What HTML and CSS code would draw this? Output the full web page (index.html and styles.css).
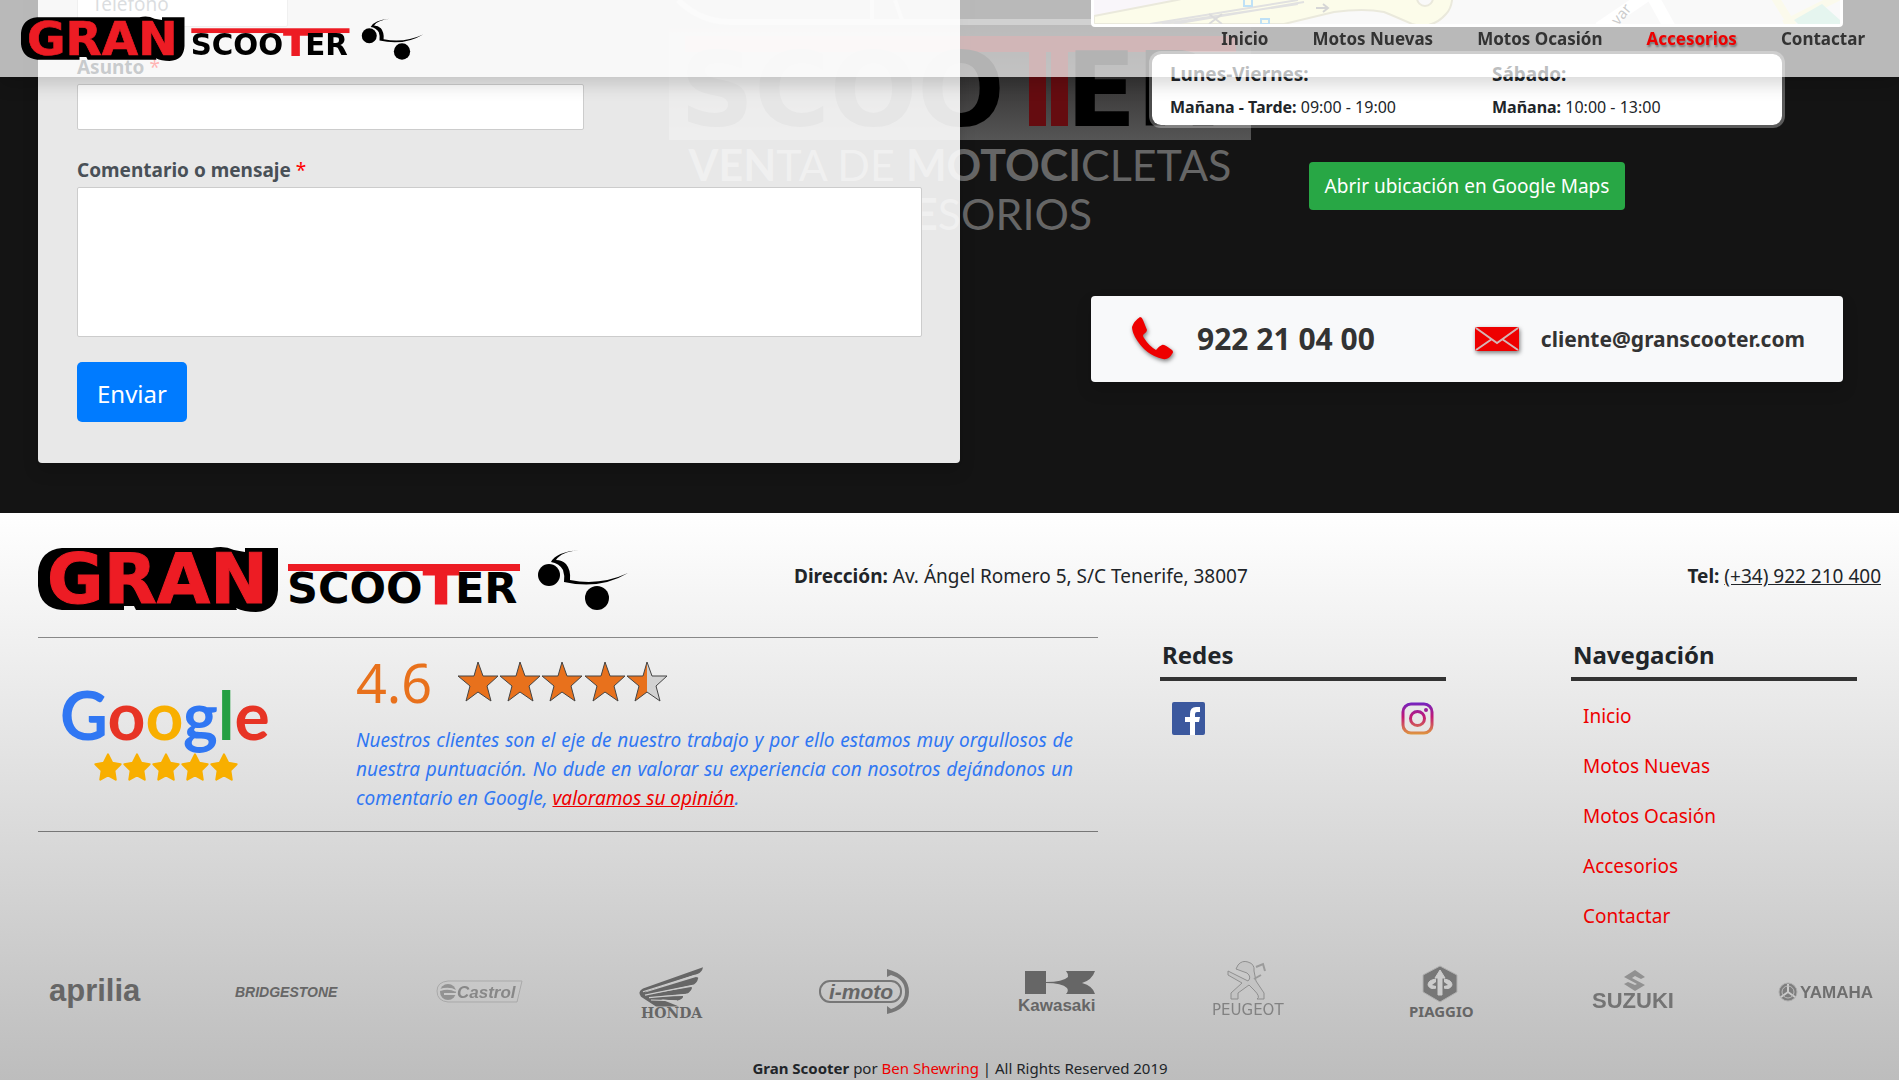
FILE: index.html
```html
<!DOCTYPE html>
<html lang="es">
<head>
<meta charset="utf-8">
<meta name="viewport" content="width=device-width, initial-scale=1">
<title>Gran Scooter</title>
<link rel="stylesheet" href="styles.css">
</head>
<body>
<svg class="defs" aria-hidden="true">
  <symbol id="logo" viewBox="0 0 590 66">
    <path d="M24 2H174Q186-1 196 4L207 6V2H240V44Q239 65 218 66Q206 66 198 62L199 64H98L96 60H86V64H24Q2 62 0 40V26Q2 4 24 2Z"/>
    <text class="logo-gran" x="9" y="57">GRAN</text>
    <rect x="250" y="18" width="232" height="7" fill="#ed1c24"/>
    <text class="logo-scooter" x="249" y="57">SCOO</text>
    <text class="logo-tee" x="403" y="57" text-anchor="middle">T</text>
    <text class="logo-scooter" x="417" y="57">ER</text>
    <ellipse cx="511" cy="29" rx="11" ry="11"/>
    <ellipse cx="559" cy="52" rx="12" ry="12"/>
    <path d="M541 4Q518 6 513 16Q521 17 525 24Q527 30 526 36Q562 44 590 27Q562 40 532 34Q533 24 528 18Q524 14 518 14Q523 6 541 4Z"/>
  </symbol>
  <symbol id="star" viewBox="0 0 40 40"><path stroke="#f8af00" stroke-width="3" stroke-linejoin="round" d="M20 2L26 14L38 16L29 25L31 38L20 32L9 38L11 25L2 16L14 14Z"/></symbol>
</svg>

<header class="navbar">
  <a href="#inicio" aria-label="Gran Scooter"><svg class="nav-logo" viewBox="0 0 590 66"><use href="#logo"/></svg></a>
  <nav class="nav-links">
    <a href="#inicio">Inicio</a>
    <a href="#nuevas">Motos Nuevas</a>
    <a href="#ocasion">Motos Ocasión</a>
    <a class="active" href="#accesorios">Accesorios</a>
    <a href="#contactar">Contactar</a>
  </nav>
</header>

<main class="contact">
  <svg class="watermark" viewBox="0 0 600 240" aria-hidden="true">
    <defs><linearGradient id="plate" x1="0" y1="0" x2="0" y2="1"><stop offset="0" stop-color="#1c1a1a"/><stop offset="1" stop-color="#555"/></linearGradient></defs>
    <path d="M18 0Q40 22 70 22H590" fill="none" stroke="#666" stroke-width="6"/>
    <path d="M212 0V20M235 0L242 20" stroke="#666" stroke-width="4"/>
    <rect x="9" y="25" width="582" height="115" fill="url(#plate)"/>
    <rect x="25" y="36" width="551" height="16" fill="#650c10"/>
    <path d="M369 52H386V126H369ZM391 52H408V126H391Z" fill="#650c10"/>
    <text class="wm-big" x="20" y="126">SCOO</text>
    <text class="wm-big" x="406" y="126">ER</text>
    <text class="wm-small" x="300" y="181" text-anchor="middle"><tspan font-weight="700">VEN</tspan>TA DE <tspan font-weight="700">MOTOCI</tspan>CLETAS</text>
    <text class="wm-small" x="300" y="230" text-anchor="middle"><tspan font-weight="700">ACCE</tspan>SORIOS</text>
  </svg>

  <form class="form-card">
    <input class="field phone" type="tel" placeholder="Teléfono" aria-label="Teléfono">
    <label for="asunto">Asunto <span class="req">*</span></label>
    <input class="field subject" id="asunto" type="text">
    <label for="mensaje">Comentario o mensaje <span class="req">*</span></label>
    <textarea class="field message" id="mensaje"></textarea>
    <button class="send" type="button">Enviar</button>
  </form>

  <div class="info">
    <div class="map">
      <svg viewBox="0 0 746 84" preserveAspectRatio="xMidYMax slice" aria-hidden="true">
        <rect width="746" height="84" fill="#eceaec"/>
        <path d="M0 0H210L83 60L0 77Z" fill="#ece0ee"/>
        <path d="M0 76L83 60L300 10H350Q366 60 352 74Q338 90 318 84Q300 76 290 72Q270 68 240 72L190 84H0Z" fill="#f6f6b8" stroke="#b9b58a" stroke-width="2"/>
        <path d="M56 84L204 60M80 84L210 62M68 84L204 64" stroke="#999" stroke-width="2" fill="none"/>
        <path d="M115 74L128 84M128 74L115 84" stroke="#888" stroke-width="2"/>
        <path d="M222 68H234M229 64L234 68L229 72" stroke="#777" stroke-width="2" fill="none"/>
        <circle cx="331" cy="58" r="8" fill="#eceaea" stroke="#b9b58a" stroke-width="2"/>
        <path d="M150 59h8v7h-8zM167 79h8v5h-8z" fill="none" stroke="#2b9be0" stroke-width="2"/>
        <path d="M505 88L555 54M555 50L576 88" stroke="#fff" stroke-width="12"/>
        <path d="M680 56L700 88M690 84L746 56" stroke="#f0efc0" stroke-width="8"/>
        <path d="M700 80L728 64L746 80V84H704Z" fill="#a8dcc8"/>
        <text class="street" x="524" y="86" transform="rotate(-50 524 86)">var</text>
      </svg>
    </div>
    <div class="hours">
      <div><h2>Lunes-Viernes:</h2><p><b>Mañana - Tarde:</b> 09:00 - 19:00</p></div>
      <div><h2>Sábado:</h2><p><b>Mañana:</b> 10:00 - 13:00</p></div>
    </div>
    <a class="maps-btn" href="#maps">Abrir ubicación en Google Maps</a>
    <div class="direct">
      <a class="phone-link" href="tel:922210400">
        <svg class="shadowed" width="44" height="44" viewBox="0 0 44 44" aria-hidden="true"><path fill="#e00" d="M1 10Q3 4 9 0Q11 0 12 3L16 13Q16 15 13 17Q11 18 13 21Q18 29 25 33Q28 29 31 28Q33 27 41 33Q43 35 41 37Q38 43 32 42Q14 38 4 20Q1 14 1 10Z"/></svg>
        922 21 04 00</a>
      <a class="mail-link" href="mailto:cliente@granscooter.com">
        <svg class="shadowed" width="44" height="26" viewBox="0 0 44 26" aria-hidden="true"><rect x="0" y="1" width="44" height="24" rx="2" fill="#e00"/><path d="M1 2L22 17L43 2M1 24L17 13M43 24L27 13" fill="none" stroke="#d5b5b5" stroke-width="2"/></svg>
        cliente@granscooter.com</a>
    </div>
  </div>
</main>

<footer class="footer">
  <div class="foot-top">
    <svg class="foot-logo" viewBox="0 0 590 66" role="img" aria-label="Gran Scooter"><use href="#logo"/></svg>
    <p><b>Dirección:</b> Av. Ángel Romero 5, S/C Tenerife, 38007</p>
    <p class="tel"><b>Tel:</b> <a href="tel:+34922210400">(+34) 922 210 400</a></p>
  </div>

  <div class="foot-main">
    <section class="rating">
      <svg class="google" viewBox="0 0 210 96" role="img" aria-label="Google">
        <text class="google-word" x="-3" y="51"><tspan fill="#3077f3">G</tspan><tspan fill="#e73425">o</tspan><tspan fill="#f8af00">o</tspan><tspan fill="#3077f3">g</tspan><tspan fill="#249f42">l</tspan><tspan fill="#e73425">e</tspan></text>
        <g fill="#f8af00"><use href="#star" x="31" y="64" width="28" height="28"/><use href="#star" x="60" y="64" width="28" height="28"/><use href="#star" x="89" y="64" width="28" height="28"/><use href="#star" x="118" y="64" width="28" height="28"/><use href="#star" x="147" y="64" width="28" height="28"/></g>
      </svg>
      <div class="review">
        <div class="score">
          <span>4.6</span>
          <svg width="212" height="42" viewBox="0 0 212 42" role="img" aria-label="4.6 de 5">
            <defs><linearGradient id="half"><stop offset=".5" stop-color="#e8711c"/><stop offset=".5" stop-color="#d2d2d2"/></linearGradient>
            <path id="rs" d="M20 1L25 15H40L29 25L33 40L20 31L8 40L12 25L0 15H16Z" stroke="#444"/></defs>
            <g fill="#e8711c"><use href="#rs" x="1"/><use href="#rs" x="43"/><use href="#rs" x="85"/><use href="#rs" x="128"/></g><use href="#rs" x="170" fill="url(#half)"/>
          </svg>
        </div>
        <p>Nuestros clientes son el eje de nuestro trabajo y por ello estamos muy orgullosos de nuestra puntuación. No dude en valorar su experiencia con nosotros dejándonos un comentario en Google, <a href="#opinion">valoramos su opinión</a>.</p>
      </div>
    </section>
    <section class="col redes">
      <h3>Redes</h3>
      <div class="social">
        <a href="#facebook" aria-label="Facebook"><svg width="33" height="33" viewBox="0 0 33 33"><rect width="33" height="33" rx="2" fill="#3b589e"/><path fill="#fff" d="M18 33V20H13V15H18V12Q18 5 24 5H28V10H25Q23 10 23 12V15H28L27 20H23V33Z"/></svg></a>
        <a href="#instagram" aria-label="Instagram"><svg width="33" height="33" viewBox="0 0 33 33"><defs><linearGradient id="ig" x1="0" y1="0" x2="0" y2="33" gradientUnits="userSpaceOnUse"><stop offset="0" stop-color="#7024c4"/><stop offset=".45" stop-color="#c21975"/><stop offset="1" stop-color="#e09b3d"/></linearGradient></defs><rect x="2" y="2" width="29" height="29" rx="8" fill="none" stroke="url(#ig)" stroke-width="3"/><circle cx="16.500" cy="16.500" r="7" fill="none" stroke="url(#ig)" stroke-width="3"/><circle cx="25" cy="8" r="2" fill="url(#ig)"/></svg></a>
      </div>
    </section>
    <section class="col sitemap">
      <h3>Navegación</h3>
      <ul>
        <li><a href="#inicio">Inicio</a></li>
        <li><a href="#nuevas">Motos Nuevas</a></li>
        <li><a href="#ocasion">Motos Ocasión</a></li>
        <li><a href="#accesorios">Accesorios</a></li>
        <li><a href="#contactar">Contactar</a></li>
      </ul>
    </section>
  </div>

  <div class="brands">
    <svg viewBox="0 0 120 70"><text class="b" font-size="31" x="15" y="44">aprilia</text></svg>
    <svg viewBox="0 0 120 70"><text class="i" font-size="14" x="9" y="40">BRIDGESTONE</text></svg>
    <svg viewBox="0 0 120 70" opacity=".65"><path d="M29 24H103L98 45H29Q18 44 18 34Q18 25 29 24Z" fill="none" stroke="#999"/><circle cx="29" cy="35" r="8" fill="#777"/><path d="M21 33Q30 30 37 34M25 37H38" fill="none" stroke="#ccc" stroke-width="2"/><text class="i" font-size="17" x="38" y="41">Castrol</text></svg>
    <svg viewBox="0 0 120 70"><g transform="matrix(1 0 0 .82 0 2)"><path d="M92 10Q91 16 87 18L36 39L34 41L85 22Q88 22 87 24Q86 30 81 32L38 43L80 34Q82 34 80 38Q78 42 74 43L42 46L72 45Q73 48 66 51L50 49L68 58H45L30 46Q26 40 32 36Z" fill="#666"/><path d="M32 40L84 20M34 44L82 32M38 47L76 43M40 50L66 51" stroke="#ccc" stroke-width="1.500"/></g><text class="bs" font-size="14" x="30" y="61">HONDA</text></svg>
    <svg viewBox="0 0 120 70"><rect x="17" y="24" width="81" height="21" rx="10" fill="none" stroke="#777" stroke-width="2"/><path d="M84 12Q106 18 106 35Q106 52 84 57V49L88 52Q102 47 102 35Q102 22 88 18L84 20Z" fill="#777"/><text class="i" font-size="21" x="26" y="42">i-moto</text></svg>
    <svg viewBox="0 0 120 70"><path d="M29 14H50V25Q67 25 72 20Q72 16 70 14H99Q96 23 86 26Q97 29 99 37H70Q73 34 71 31Q66 26 50 26V37H29Z" fill="#666"/><text class="b" font-size="17" x="22" y="54">Kawasaki</text></svg>
    <svg viewBox="0 0 120 70" opacity=".7"><path d="M50 8Q54 3 60 5Q67 7 66 14L68 24L76 36V42H69Q73 40 66 33L61 28L50 36V42H43V36L54 26L40 18V14L52 20L60 24Q64 20 59 16L48 12Z" fill="#c2c2c2" stroke="#777"/><path d="M68 10L75 7L77 14M66 22L73 18" fill="none" stroke="#888" stroke-width="2"/><text class="d" font-size="15" x="24" y="58">PEUGEOT</text></svg>
    <svg viewBox="0 0 120 70"><path d="M60 9L77 18V35L60 45L43 35V18Z" fill="#777" stroke="#b2b2b2"/><path d="M60 13L65 21H62V38H58V21H55ZM56 22Q48 23 48 28Q50 33 56 31M64 22Q72 23 72 28Q70 33 64 31" fill="#ccc" stroke="#ccc" stroke-width="1"/><path d="M56 25L52 28L56 29M64 25L68 28L64 29" fill="#777"/><text class="n" font-size="15" x="29" y="60">PIAGGIO</text></svg>
    <svg viewBox="0 0 120 70" opacity=".85"><path d="M62 13L72 20L68 22L62 19L59 21L72 28L62 34L51 27L55 25L62 28L64 27L51 20Z" fill="#888"/><text class="b" font-size="22" x="19" y="51">SUZUKI</text></svg>
    <svg viewBox="0 0 120 70" opacity=".9"><circle cx="23" cy="35" r="9" fill="#777" stroke="#aaa"/><path d="M23 35V27M23 35L16 40M23 35L30 40" stroke="#ccc" stroke-width="2"/><circle cx="23" cy="35" r="6" fill="none" stroke="#bbb"/><text class="b" font-size="17" x="35" y="41">YAMAHA</text></svg>
  </div>
  <p class="copy"><b>Gran Scooter</b> por <a href="#autor">Ben Shewring</a> | All Rights Reserved 2019</p>
</footer>
</body>
</html>
```

FILE: styles.css
```css
* { box-sizing: border-box; }
body {
  margin: 0;
  font: 16px/24px "Noto Sans", "Open Sans", sans-serif;
  color: #212529;
  background: #bfbfbf;
}
a { color: inherit; text-decoration: none; }
h2, h3, p, ul { margin: 0; padding: 0; }
ul { list-style: none; }
svg { display: block; }
.defs { position: absolute; width: 0; height: 0; }

.logo-gran { font: 700 69px "DejaVu Sans", sans-serif; fill: #ed1c24; stroke: #ed1c24; stroke-width: 1; }
.logo-scooter { font: 700 43px "DejaVu Sans", sans-serif; fill: #000; }
.logo-tee { font: 700 50px "DejaVu Sans", sans-serif; fill: #ed1c24; stroke: #ed1c24; stroke-width: 3; }

.navbar {
  position: fixed;
  z-index: 10;
  top: 0;
  left: 0;
  right: 0;
  height: 77px;
  padding: 0 34px 0 20px;
  display: flex;
  justify-content: space-between;
  align-items: center;
  background: rgba(255, 255, 255, .7);
  box-shadow: 0 8px 16px rgba(0, 0, 0, .15);
}
.nav-logo { width: 404px; height: 45px; }
.nav-links { display: flex; gap: 44px; font-size: 17px; font-weight: 700; color: #333; }
.nav-links .active { color: #e00; text-shadow: 1px 2px 2px rgba(0, 0, 0, .35); }

.contact {
  position: relative;
  overflow: hidden;
  display: grid;
  grid-template-columns: 922fr 131fr 752fr;
  padding: 0 56px 50px 2%;
  background: #141414;
}
.watermark { position: absolute; top: 0; left: calc(50% - 290px); width: 600px; height: 240px; }
.wm-big { font: 700 103px "DejaVu Sans", sans-serif; fill: #000; }
.wm-small { font: 400 43px Lato, sans-serif; fill: #666; }

.form-card {
  position: relative;
  margin-top: -60px;
  padding: 40px 38px 41px 39px;
  display: flex;
  flex-direction: column;
  align-items: flex-start;
  border-radius: 4px;
  background: rgba(255, 255, 255, .9);
  box-shadow: 0 8px 16px rgba(0, 0, 0, .15);
}
.form-card label { margin: 26px 0 2px; font: 700 19px/29px "Noto Sans", sans-serif; color: #495057; }
.form-card .req { color: #f00; font-weight: 400; }
.field {
  height: 47px;
  padding: 6px 14px;
  font: 19px/29px "Noto Sans", sans-serif;
  color: #495057;
  background: #fff;
  border: 1px solid #ccc;
  border-radius: 2px;
}
.field::placeholder { color: #868e96; }
.phone { width: 25%; }
.subject { width: 60%; height: 46px; }
.message { width: 100%; height: 150px; resize: none; }
.send {
  margin-top: 25px;
  height: 60px;
  padding: 4px 20px 0;
  font: 24px/36px "Noto Sans", sans-serif;
  color: #fff;
  background: #007bff;
  border: 0;
  border-radius: 5px;
}

.info { grid-column: 3; position: relative; display: flex; flex-direction: column; align-items: center; }
.map {
  width: 100%;
  height: 87px;
  margin-top: -60px;
  border: 3px solid #fff;
  border-radius: 4px;
  overflow: hidden;
}
.map svg { width: 100%; height: 100%; }
.street { font: 15px "Noto Sans", sans-serif; fill: #555; }
.hours {
  width: 636px;
  max-width: 100%;
  margin-top: 24px;
  padding: 7px 18px 5px;
  display: grid;
  grid-template-columns: 1fr 1fr;
  column-gap: 50px;
  background: #fff;
  background-clip: padding-box;
  border: 3px solid rgba(255, 255, 255, .3);
  border-radius: 12px;
}
.hours h2 { font-size: 19px; line-height: 26px; margin-bottom: 7px; }
.hours p { line-height: 26px; white-space: nowrap; }
.maps-btn {
  margin-top: 34px;
  padding: 9px 16px;
  font-size: 19px;
  line-height: 30px;
  color: #fff;
  background: #28a745;
  border-radius: 4px;
}
.direct {
  width: 100%;
  height: 86px;
  margin-top: 86px;
  padding: 0 38px 0 40px;
  display: flex;
  justify-content: space-between;
  align-items: center;
  color: #333;
  font-weight: 700;
  background: #f8f9fa;
  border-radius: 4px;
  box-shadow: 0 8px 16px rgba(0, 0, 0, .15);
}
.direct a { display: flex; align-items: center; gap: 22px; }
.phone-link { font-size: 30px; }
.mail-link { font-size: 21px; }
.shadowed { filter: drop-shadow(1px 2px 2px rgba(0, 0, 0, .5)); }

.footer { padding-top: 33px; background: linear-gradient(#fff, #bdbdbd); }
.foot-top {
  display: grid;
  grid-template-columns: 590px 1fr auto;
  align-items: center;
  padding: 0 18px 0 2%;
  font-size: 19px;
  line-height: 28px;
}
.foot-top p { padding: 0 0 6px 166px; }
.foot-logo { width: 590px; height: 66px; }
.tel a { text-decoration: underline; }

.foot-main {
  display: grid;
  grid-template-columns: 1060fr 62fr 286fr 125fr 286fr;
  padding: 25px 42px 0 2%;
}
.redes { grid-column: 3; }
.sitemap { grid-column: 5; }
.rating {
  align-self: start;
  display: flex;
  height: 195px;
  border-top: 1px solid #888;
  border-bottom: 1px solid #777;
}
.google { width: 210px; height: 96px; margin: 51px 83px 0 25px; overflow: visible; }
.google-word { font: 700 66px Lato, sans-serif; }
.review { flex: 1; padding-right: 25px; }
.score { display: flex; align-items: center; gap: 25px; height: 88px; color: #e8711c; }
.score span { font: 54px/80px "Noto Sans", sans-serif; }
.review p { font-size: 19px; line-height: 29px; font-style: italic; color: #3077f3; text-align: justify; }
.review p a { color: #e00; text-decoration: underline; }
.col h3 { padding: 0 2px 4px; font-size: 24px; line-height: 36px; border-bottom: 4px solid #333; }
.social { display: flex; justify-content: space-between; padding: 21px 12px; }
.col ul { padding: 10px 12px 0; }
.col li { height: 50px; font-size: 19px; line-height: 50px; color: #e00; }

.brands { display: flex; justify-content: space-between; padding: 16px 14px 0 34px; }
.brands svg { width: 120px; height: 70px; }
.brands text { fill: #666; }
.b { font-family: "Liberation Sans", sans-serif; font-weight: 700; }
.i { font-family: "Liberation Sans", sans-serif; font-weight: 700; font-style: italic; }
.bs { font-family: "DejaVu Serif", serif; font-weight: 700; }
.d { font-family: "DejaVu Sans", sans-serif; }
.n { font-family: "Noto Sans", sans-serif; font-weight: 700; }
.copy { padding: 29px 0 0 21px; text-align: center; font-size: 15px; }
.copy a { color: #e00; }
```
